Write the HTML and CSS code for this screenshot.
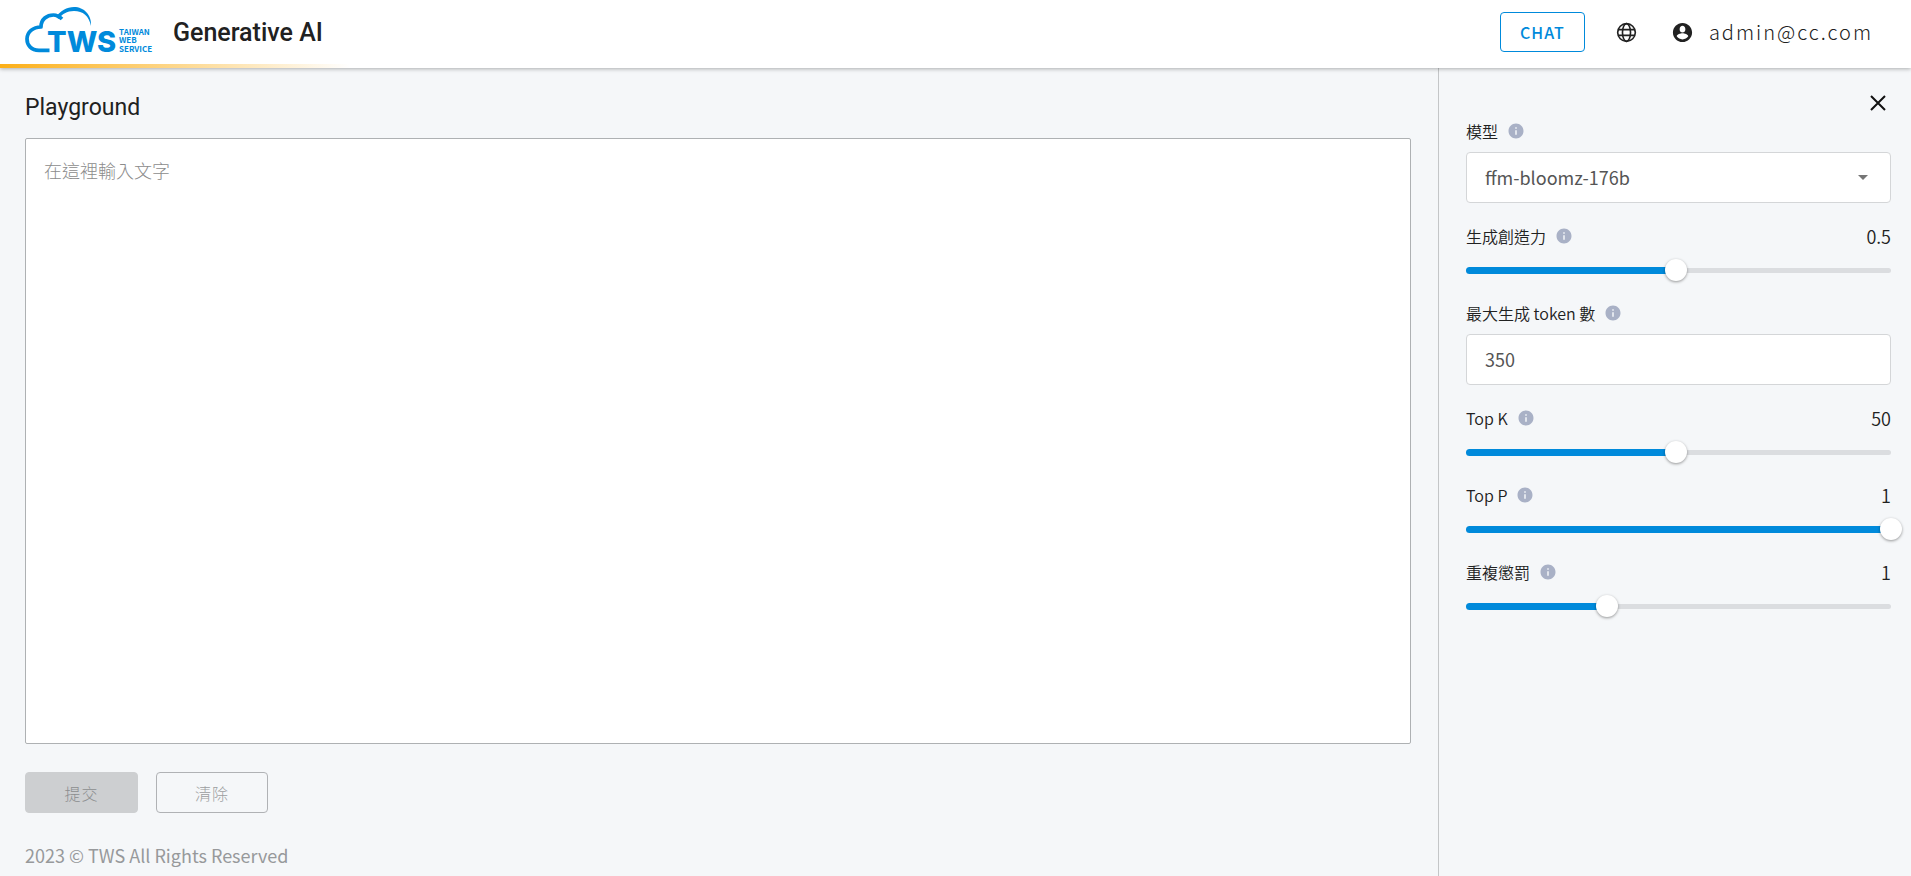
FILE: index.html
```html
<!DOCTYPE html>
<html lang="zh-Hant">
<head>
<meta charset="utf-8">
<meta name="viewport" content="width=device-width, initial-scale=1">
<title>Generative AI</title>
<link rel="stylesheet" href="styles.css">
</head>
<body>
<svg width="0" height="0" class="sprite" aria-hidden="true">
  <symbol id="info" viewBox="0 0 24 24"><path d="M12 2C6.480 2 2 6.480 2 12s4.480 10 10 10 10-4.480 10-10S17.520 2 12 2zm1 15h-2v-6h2v6zm0-8h-2V7h2v2z"/></symbol>
</svg>
<header class="header">
  <a class="brand" href="#" aria-label="TWS Taiwan Web Service">
    <svg class="logo" viewBox="0 0 128 50" width="128" height="50">
      <path fill="none" stroke="#008adb" stroke-width="3.700" stroke-linejoin="round" d="M24.500 43.300H14C6 43.300 2 38 2 32C2 25 8 20 16 20C16 12 22 8 28.500 8C32 8 34 9 37 12"/>
      <path fill="#008adb" d="M31 10C35 4 42 0 49 0C59 0 67 8 66 19C64 9 58 4 49 4C42 4 37 7 33.500 12Z"/>
      <text class="logo-name" x="22" y="45">TWS</text>
      <text class="logo-sub" x="94" y="28">TAIWAN</text>
      <text class="logo-sub" x="94" y="36">WEB</text>
      <text class="logo-sub" x="94" y="45">SERVICE</text>
    </svg>
  </a>
  <h1 class="product">Generative AI</h1>
  <nav class="actions">
    <button class="btn btn-chat" type="button">CHAT</button>
    <button class="icon-btn" type="button" aria-label="Language">
      <svg viewBox="0 0 24 24" width="23" height="23" fill="none" stroke="#212121" stroke-width="1.700"><circle cx="12" cy="12" r="9.200"/><ellipse cx="12" cy="12" rx="4.200" ry="9.200"/><path d="M3.500 9h17M3.500 15h17"/></svg>
    </button>
    <button class="account" type="button">
      <svg viewBox="0 0 24 24" width="23" height="23"><path d="M12 2C6.480 2 2 6.480 2 12s4.480 10 10 10 10-4.480 10-10S17.520 2 12 2zm0 3c1.660 0 3 1.340 3 3.500S13.660 12 12 12s-3-1.340-3-3.500S10.340 5 12 5zm0 14.200c-2.500 0-4.710-1.280-6-3.220.03-1.990 4-3.080 6-3.080 1.990 0 5.970 1.090 6 3.080-1.290 1.940-3.500 3.220-6 3.220z"/></svg>
      <span>admin@cc.com</span>
    </button>
  </nav>
</header>
<div class="layout">
  <main class="main">
    <h2 class="title">Playground</h2>
    <textarea class="prompt" aria-label="在這裡輸入文字" placeholder="在這裡輸入文字"></textarea>
    <div class="buttons">
      <button class="btn btn-submit" type="button" disabled>提交</button>
      <button class="btn btn-clear" type="button" disabled>清除</button>
    </div>
    <footer class="footer">2023 © TWS All Rights Reserved</footer>
  </main>
  <aside class="panel">
    <button class="close" type="button" aria-label="Close">
      <svg viewBox="0 0 16 16" width="16" height="16"><path d="M1 1L15 15M15 1L1 15"/></svg>
    </button>
    <div class="field">
      <div class="row"><label for="model">模型</label><svg class="info"><use href="#info"/></svg></div>
      <select class="control" id="model"><option>ffm-bloomz-176b</option></select>
    </div>
    <div class="field field-range">
      <div class="row"><label for="temp">生成創造力</label><svg class="info"><use href="#info"/></svg><output for="temp">0.5</output></div>
      <div class="slider"><span class="rail"></span><span class="fill" style="width:49.500%"></span><input id="temp" type="range" min="0.01" max="1" step="0.01" value="0.5"></div>
    </div>
    <div class="field">
      <div class="row"><label for="tokens">最大生成 token 數</label><svg class="info"><use href="#info"/></svg></div>
      <input class="control" id="tokens" type="text" inputmode="numeric" value="350">
    </div>
    <div class="field field-range">
      <div class="row"><label for="topk">Top K</label><svg class="info"><use href="#info"/></svg><output for="topk">50</output></div>
      <div class="slider"><span class="rail"></span><span class="fill" style="width:49.500%"></span><input id="topk" type="range" min="1" max="100" value="50"></div>
    </div>
    <div class="field field-range">
      <div class="row"><label for="topp">Top P</label><svg class="info"><use href="#info"/></svg><output for="topp">1</output></div>
      <div class="slider"><span class="rail"></span><span class="fill" style="width:100%"></span><input id="topp" type="range" min="0.01" max="1" step="0.01" value="1"></div>
    </div>
    <div class="field field-range">
      <div class="row"><label for="penalty">重複懲罰</label><svg class="info"><use href="#info"/></svg><output for="penalty">1</output></div>
      <div class="slider"><span class="rail"></span><span class="fill" style="width:33%"></span><input id="penalty" type="range" min="0.01" max="3" step="0.01" value="1"></div>
    </div>
  </aside>
</div>
</body>
</html>
```
FILE: styles.css
```css
* { box-sizing: border-box; }
body {
  margin: 0;
  min-height: 100vh;
  display: flex;
  flex-direction: column;
  background: #f5f7f9;
  color: #212121;
  font-family: "Noto Sans CJK TC", sans-serif;
  font-size: 18px;
  font-weight: 400;
}
button, input, select, textarea { font: inherit; color: inherit; margin: 0; }
button { cursor: pointer; }
button:disabled { cursor: default; }
h1, h2 { margin: 0; }
.sprite { position: absolute; }

.header {
  position: relative;
  display: flex;
  align-items: center;
  height: 68px;
  padding: 0 38px 4px 25px;
  background: #fff;
  box-shadow: 0 1px 4px rgba(0, 0, 0, .3);
}
.header::after {
  content: "";
  position: absolute;
  left: 0;
  bottom: 0;
  width: 350px;
  height: 4px;
  background: linear-gradient(90deg, #fcaf17, #fff);
}
.logo { display: block; overflow: visible; }
.logo-name { font: 800 29px Inter, sans-serif; fill: #008adb; }
.logo-sub { font: 700 8px "Noto Sans CJK TC", sans-serif; fill: #008adb; }
.product { margin-left: 20px; padding-top: 2px; font: 500 25px/32px Roboto, sans-serif; }
.actions { display: flex; align-items: center; margin-left: auto; }
.btn {
  height: 41px;
  padding: 0;
  border: 1px solid;
  border-radius: 4px;
  font-size: 16px;
  font-weight: 300;
  line-height: 24px;
  letter-spacing: 1px;
}
.btn-chat { width: 85px; height: 40px; background: #fff; border-color: #008adb; color: #008adb; font-weight: 500; }
.icon-btn, .account, .close {
  display: flex;
  align-items: center;
  padding: 0;
  border: 0;
  background: none;
}
.icon-btn { margin-left: 30px; }
.account { margin-left: 33px; gap: 15px; fill: #212121; font-size: 20px; font-weight: 300; line-height: 28px; letter-spacing: 2px; }

.layout { flex: 1; display: flex; }
.main { flex: 1; display: flex; flex-direction: column; min-width: 0; padding: 24px 27px 7px 25px; }
.title { margin-bottom: 14px; font: 400 23px/32px Roboto, sans-serif; }
.prompt {
  flex: 1;
  width: 100%;
  padding: 18px;
  border: 1px solid #aeb1b3;
  border-radius: 2px;
  background: #fff;
  line-height: 26px;
  font-weight: 300;
  resize: none;
}
.prompt::placeholder { color: #8c8c8c; opacity: 1; }
.buttons { display: flex; gap: 18px; margin: 28px 0; }
.btn-submit { width: 113px; background: #cdcfd1; border-color: #cdcfd1; color: #8b8d8e; }
.btn-clear { width: 112px; background: none; border-color: #b0b2b5; color: #9c9ea0; }
.footer { color: #97999b; line-height: 28px; }

.panel {
  display: flex;
  flex-direction: column;
  width: 473px;
  padding: 27px 20px 24px 27px;
  border-left: 1px solid #c4c6c8;
}
.close { align-self: flex-end; margin: 0 5px 8px 0; stroke: #111; stroke-width: 2; }
.field { margin-bottom: 21px; }
.field-range { margin-bottom: 18px; }
.row { display: flex; align-items: center; height: 24px; margin-bottom: 9px; font-size: 16px; font-weight: 350; line-height: 24px; }
.info { width: 18px; height: 18px; margin-left: 9px; fill: #a9b1c6; }
output { margin-left: auto; font-size: 18px; }
.control {
  display: block;
  width: 100%;
  height: 51px;
  padding: 0 18px 2px;
  border: 1px solid #d4d6d8;
  border-radius: 4px;
  background: #fff;
  color: #555;
}
select.control {
  appearance: none;
  background: #fff url("data:image/svg+xml,%3Csvg xmlns='http://www.w3.org/2000/svg' viewBox='0 0 10 5'%3E%3Cpath fill='%23757575' d='M0 0h10L5 5z'/%3E%3C/svg%3E") no-repeat right 22px center / 10px 5px;
}

.slider { display: grid; grid-template-columns: minmax(0, 1fr); align-items: center; height: 26px; }
.slider > * { grid-area: 1 / 1; }
.rail { height: 5px; border-radius: 3px; background: #dbdde0; }
.fill { height: 7px; border-radius: 4px; background: #008adb; }
.slider input { appearance: none; width: calc(100% + 22px); height: 22px; margin: 0 -11px; background: none; }
.slider input::-webkit-slider-thumb {
  appearance: none;
  width: 22px;
  height: 22px;
  border-radius: 50%;
  background: #fff;
  box-shadow: 0 1px 3px rgba(0, 0, 0, .4);
}
```
